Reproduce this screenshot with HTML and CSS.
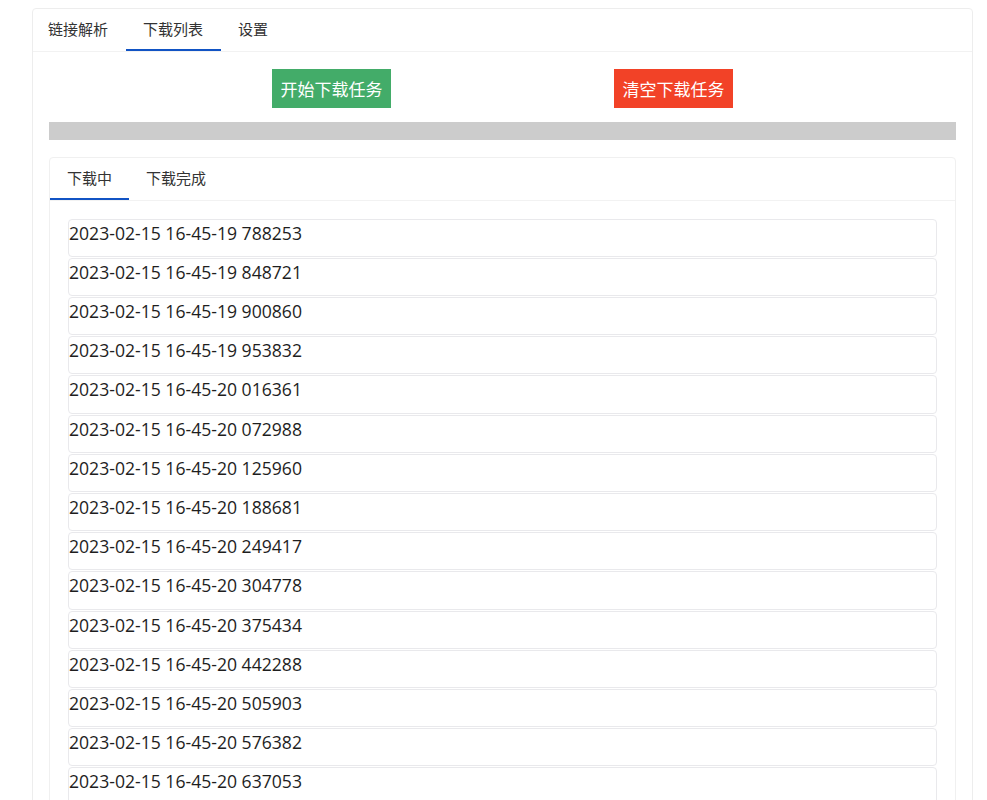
FILE: index.html
```html
<!DOCTYPE html>
<html lang="zh">
<head>
    <link rel="stylesheet" href="styles.css">
    <meta charset="UTF-8">
    <meta name="viewport" content="width=device-width, initial-scale=1.0">
    <title>下载列表</title>
</head>
<body>

    <div class="card">
        <div class="tabs">
            <div class="tab">链接解析</div>
            <div class="tab active">下载列表</div>
            <div class="tab">设置</div>
        </div>
        <div class="card-body">
            <div class="actions">
                <button class="btn btn-start">开始下载任务</button>
                <button class="btn btn-clear">清空下载任务</button>
            </div>
            <div class="progress"></div>

            <div class="card inner">
                <div class="tabs">
                    <div class="tab active">下载中</div>
                    <div class="tab">下载完成</div>
                </div>
                <div class="list">
                    <div class="item">2023-02-15 16-45-19 788253</div>
                    <div class="item">2023-02-15 16-45-19 848721</div>
                    <div class="item">2023-02-15 16-45-19 900860</div>
                    <div class="item">2023-02-15 16-45-19 953832</div>
                    <div class="item">2023-02-15 16-45-20 016361</div>
                    <div class="item">2023-02-15 16-45-20 072988</div>
                    <div class="item">2023-02-15 16-45-20 125960</div>
                    <div class="item">2023-02-15 16-45-20 188681</div>
                    <div class="item">2023-02-15 16-45-20 249417</div>
                    <div class="item">2023-02-15 16-45-20 304778</div>
                    <div class="item">2023-02-15 16-45-20 375434</div>
                    <div class="item">2023-02-15 16-45-20 442288</div>
                    <div class="item">2023-02-15 16-45-20 505903</div>
                    <div class="item">2023-02-15 16-45-20 576382</div>
                    <div class="item">2023-02-15 16-45-20 637053</div>
                </div>
            </div>
        </div>
    </div>

</body>
</html>
```

FILE: styles.css
```css
*{
    margin: 0;
    padding: 0;
    box-sizing: border-box;
}
body{
    margin: 8px 14px 8px 32px;
    font-family: "Open Sans", "Noto Sans CJK SC", sans-serif;
    color: #222;
    background: #fff;
}
.card{
    border: 1px solid #ededed;
    border-radius: 4px;
    background: #fff;
}
.tabs{
    display: flex;
    height: 43px;
    border-bottom: 1px solid #f2f2f2;
}
.tab{
    padding: 0 17.5px;
    font-size: 15px;
    line-height: 41px;
    color: #333;
    border-bottom: 2px solid transparent;
}
.tab:first-child{
    padding-left: 15px;
}
.tab.active{
    border-bottom-color: #1153c4;
}
.card-body{
    padding: 17px 16px 0;
}
.actions{
    display: flex;
    justify-content: space-evenly;
}
.btn{
    width: 119px;
    height: 39px;
    border: none;
    font-family: "Noto Sans CJK SC", sans-serif;
    font-size: 17px;
    color: #fff;
}
.btn-start{
    background-color: #43ac69;
}
.btn-clear{
    background-color: #f24227;
}
.progress{
    height: 17.5px;
    margin: 14px 0 17px;
    background-color: #cccccc;
}
.inner{
    border-color: #f0f0f0;
}
.inner .tab{
    padding: 0 17px;
}
.list{
    padding: 18px 18px 0;
}
.item{
    font-size: 17.6px;
    line-height: 26.4px;
    padding-bottom: 9.8px;
    margin-bottom: 1px;
    border: 1px solid #e9e9ec;
    border-radius: 4px;
    color: #1e1e1e;
}
```
